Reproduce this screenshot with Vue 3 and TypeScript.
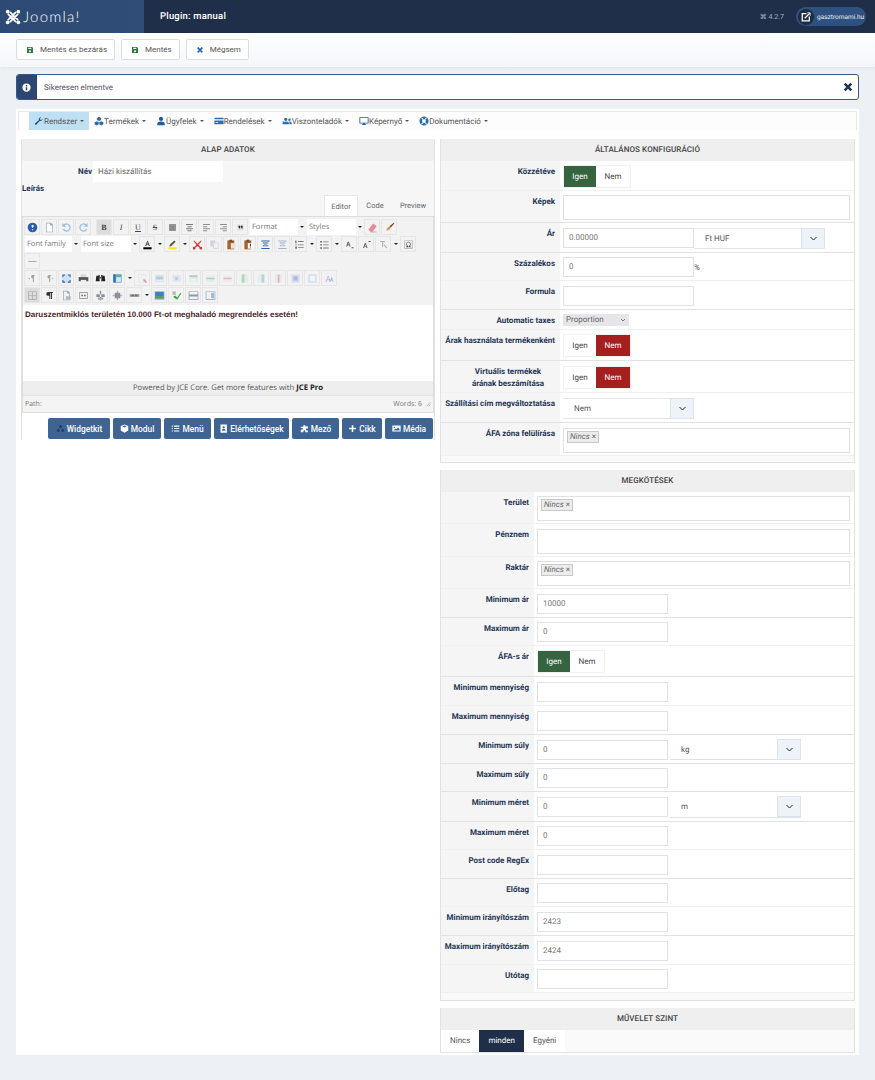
<script setup lang="ts">
interface Field {
  label: string;
  h: number;
  kind: "toggle" | "multi" | "input" | "combo" | "mini" | "select" | "none";
  value?: string;
  unit?: string;
  on?: "yes" | "no";
  chip?: boolean;
  suffix?: string;
  strong?: boolean;
  wrap?: boolean;
}

interface Tool {
  i?: string;
  t?: string;
  sel?: string;
  w?: number;
  arrow?: boolean;
  active?: boolean;
  dim?: boolean;
  gap?: boolean;
}

type Shape = [string, string];

const general: Field[] = [
  { label: "Közzétéve", h: 30, kind: "toggle", on: "yes" },
  { label: "Képek", h: 32, kind: "multi", strong: true },
  { label: "Ár", h: 30, kind: "combo", value: "0.00000", unit: "Ft HUF", strong: true },
  { label: "Százalékos", h: 28, kind: "input", value: "0", suffix: "%" },
  { label: "Formula", h: 29, kind: "input", strong: true },
  { label: "Automatic taxes", h: 20, kind: "mini" },
  { label: "Árak használata termékenként", h: 31, kind: "toggle", on: "no", strong: true },
  { label: "Virtuális termékek árának beszámítása", h: 32, kind: "toggle", on: "no", wrap: true },
  { label: "Szállítási cím megváltoztatása", h: 30, kind: "select", unit: "Nem", strong: true },
  { label: "ÁFA zóna felülírása", h: 33, kind: "multi", chip: true },
];

const limits: Field[] = [
  { label: "Terület", h: 32, kind: "multi", chip: true },
  { label: "Pénznem", h: 33, kind: "multi" },
  { label: "Raktár", h: 32, kind: "multi", chip: true },
  { label: "Minimum ár", h: 29, kind: "input", value: "10000", strong: true },
  { label: "Maximum ár", h: 28, kind: "input", value: "0" },
  { label: "ÁFA-s ár", h: 31, kind: "toggle", on: "yes", strong: true },
  { label: "Minimum mennyiség", h: 29, kind: "input" },
  { label: "Maximum mennyiség", h: 29, kind: "input", strong: true },
  { label: "Minimum súly", h: 29, kind: "combo", value: "0", unit: "kg", strong: true },
  { label: "Maximum súly", h: 28, kind: "input", value: "0", strong: true },
  { label: "Minimum méret", h: 30, kind: "combo", value: "0", unit: "m", strong: true },
  { label: "Maximum méret", h: 28, kind: "input", value: "0" },
  { label: "Post code RegEx", h: 29, kind: "input", strong: true },
  { label: "Előtag", h: 28, kind: "input" },
  { label: "Minimum irányítószám", h: 29, kind: "input", value: "2423", strong: true },
  { label: "Maximum irányítószám", h: 29, kind: "input", value: "2424" },
  { label: "Utótag", h: 28, kind: "input" },
];

const menu = [
  { text: "Rendszer", icon: "M21 6.5a5.5 5.5 0 0 1-7.4 5.2L6 20.5a2.2 2.2 0 0 1-3.3-3l8.8-7.5A5.5 5.5 0 0 1 17.5 3l-3.2 3.2.7 2.8 2.8.7L21 6.5z", color: "#2c4f7c" },
  { text: "Termékek", icon: "M12 2l5 2.500v5l-5 2.500-5-2.500v-5zM6.500 12.500l5 2.500v5l-5 2.500-5-2.500v-5zM17.500 12.500l5 2.500v5l-5 2.500-5-2.500v-5z", color: "#2f6ea8" },
  { text: "Ügyfelek", icon: "M12 2a5 5 0 1 1 0 10 5 5 0 0 1 0-10zM3 22v-3c0-3 3-6 9-6s9 3 9 6v3z", color: "#1f5aa0" },
  { text: "Rendelések", icon: "M1 4h22v16H1zM1 8v3h22V8zM4 15v2h6v-2z", color: "#2a70b0" },
  { text: "Viszonteladók", icon: "M9 4a4 4 0 1 1 0 8 4 4 0 0 1 0-8zM18 6a3 3 0 1 1 0 6 3 3 0 0 1 0-6zM1 20v-2c0-3 3-5 8-5s8 2 8 5v2zM18 20v-3c0-1.500-.5-3-1.500-4 3.500 0 7 1.500 7 4v3zM1 12h3v2H1z", color: "#2a70b0" },
  { text: "Képernyő", icon: "M2 3h20a1 1 0 0 1 1 1v13a1 1 0 0 1-1 1h-8v2h3v1.500H7V20h3v-2H2a1 1 0 0 1-1-1V4a1 1 0 0 1 1-1zM3 5v11h18V5z", color: "#1f5aa0" },
  { text: "Dokumentáció", icon: "M12 1a11 11 0 1 1 0 22 11 11 0 0 1 0-22zM12 7.500a4.500 4.500 0 1 0 0 9 4.500 4.500 0 0 0 0-9zM5 5l4 4 1.500-1L7 3.500zM19 5l-4 4-1.500-1L17 3.500zM5 19l4-4 1.500 1L7 20.500zM19 19l-4-4-1.500 1 3.500 4.500z", color: "#2a70b0" },
];

const icons: Record<string, Shape[]> = {
  help: [["M8 1a7 7 0 1 1 0 14A7 7 0 0 1 8 1z", "#2a5fb0"], ["M6.500 6a1.700 1.700 0 1 1 2.300 1.600c-.6.3-.8.6-.8 1.400M7.300 10.500h1.500v1.500H7.300z", "#fff"]],
  doc: [["M3 1h7l3 3v11H3z", "#fff"], ["M3 1h7l3 3v11H3zM4 2v12h8V5H9V2z", "#9aa3ad"]],
  undo: [["M8 2a6 6 0 1 1-5.500 8.500l2-.8A4 4 0 1 0 5.500 5L7.500 7H2V1.500l2 2A6 6 0 0 1 8 2z", "#5d9fd8"]],
  redo: [["M8 2a6 6 0 1 0 5.500 8.500l-2-.8A4 4 0 1 1 10.500 5L8.500 7H14V1.500l-2 2A6 6 0 0 0 8 2z", "#5d9fd8"]],
  alignl: [["M3 3h10v10H3z", "#8b8f94"]],
  alignc: [["M3 3h10v1.500H3zM5 6h6v1.500H5zM3 9h10v1.500H3zM5 12h6v1.500H5z", "#777"]],
  alignr: [["M3 3h10v1.500H3zM3 6h6v1.500H3zM3 9h10v1.500H3zM3 12h6v1.500H3z", "#8b8f94"]],
  alignj: [["M3 3h10v1.500H3zM7 6h6v1.500H7zM3 9h10v1.500H3zM7 12h6v1.500H7z", "#8b8f94"]],
  quote: [["M3 3h10v10H3z", "#e6e6e6"], ["M5 5.500h2.500v4H6V8H5zM8.500 5.500H11v4H9.500V8h-1z", "#222"]],
  eraser: [["M9 2l5 4-6 8H5L2 11z", "#e88a9a"], ["M5 14h9v1H5z", "#999"]],
  brush: [["M14 1l1 1-5 6-2-2z", "#7a4a1c"], ["M8 6l2 2-2 3-5 2c1-1 1-3 2-4z", "#c9963f"]],
  color: [["M8 2l3.500 8H10l-.7-2H6.700L6 10H4.500zM7.200 6.500h1.600L8 4.300z", "#333"], ["M2 12h12v3H2z", "#000"]],
  mark: [["M10.500 2l2 2L6 10.500 3.500 11l.5-2.500z", "#555"], ["M2 12h12v3H2z", "#ffe600"]],
  cut: [["M3 2l5 5 5-5 1 1-4.500 5.500 3 3a2 2 0 1 1-1.500 1.200L8 10l-3 2.700A2 2 0 1 1 3.500 11.500l3-3L2 3z", "#d23b3b"]],
  copy: [["M2 2h7v3h5v9H6v-3H2z", "#b7c3cc"], ["M7 6h6v7H7z", "#eef1f3"]],
  paste: [["M2 2h10v13H2z", "#a8632a"], ["M5 1h4v3H5z", "#555"], ["M7 6h7v8H7z", "#e8e4dc"]],
  paste2: [["M2 2h10v13H2z", "#a8632a"], ["M5 1h4v3H5z", "#555"], ["M7 6h7v8H7z", "#fff"], ["M10 7h1.500v3H10zM10 11h1.500v1.500H10z", "#333"]],
  lines: [["M2 2h12v1.500H2zM2 13h12v1.500H2z", "#2a5fb0"], ["M4 5h8v1.500H4zM4 9h8v1.500H4z", "#668"], ["M6 6h4v4H6z", "#88a8d8"]],
  lines2: [["M2 2h12v1.500H2zM2 13h12v1.500H2z", "#9fb3cf"], ["M4 5h8v1.500H4zM4 9h8v1.500H4z", "#aab"], ["M6 6h4v4H6z", "#c8d4e6"]],
  ol: [["M2 2h1.500v4H2zM2 8h2v1H2zM2 11h2v3H2z", "#555"], ["M6 3h8v1.200H6zM6 8h8v1.200H6zM6 12h8v1.200H6z", "#777"]],
  ul: [["M2 3h2v2H2zM2 7.500h2v2H2zM2 12h2v2H2z", "#444"], ["M6 3.500h8v1.200H6zM6 8h8v1.200H6zM6 12.500h8v1.200H6z", "#777"]],
  sub: [["M3 11l2.500-7h1.500l2.500 7H8l-.5-2H5l-.5 2zM5.400 8h1.700l-.8-2.500zM11 12h3v1.500h-3z", "#555"]],
  sup: [["M3 13l2.500-7h1.500l2.500 7H8l-.5-2H5l-.5 2zM5.400 10h1.700l-.8-2.500zM11 3h3v1.500h-3z", "#555"]],
  style: [["M3 3h7v1.500H7.500v7H6v-7H3z", "#a9b2b8"], ["M8.500 8.500h1l4 4v1h-1l-4-4z", "#a9b2b8"]],
  omega: [["M2 2h12v12H2zM3 3v10h10V3z", "#aaa"], ["M8 4a3.500 3.500 0 0 1 2 6.300V11h1.500v1h-3v-2.300a2.500 2.500 0 1 0-1 0V12h-3v-1H6v-.7A3.500 3.500 0 0 1 8 4z", "#444"]],
  hr: [["M2 7.500h12v1H2z", "#8a8a8a"]],
  ltr: [["M6 3h5v1.500h-1V13H8.500V8a2.500 2.500 0 0 1 0-5zM2 8l2-1.500v3z", "#9aa0a6"]],
  rtl: [["M5 3h5v1.500H9V13H7.500V8a2.500 2.500 0 0 1 0-5zM14 8l-2-1.500v3z", "#9aa0a6"]],
  full: [["M2 2h12v12H2z", "#cfe0f8"], ["M2 2h4v1.500H3.500V6H2zM10 2h4v4h-1.500V3.500H10zM2 10h1.500v2.500H6V14H2zM12.500 10H14v4h-4v-1.500h2.500z", "#2a5fb0"]],
  print: [["M4 2h8v4H4z", "#d8d8d8"], ["M1 6h14v6H1z", "#555"], ["M4 10h8v4H4z", "#eee"]],
  find: [["M2 4h4l1 8H1zM10 4h4l1 8H9z", "#222"], ["M5 3h2v5H5zM9 3h2v5H9zM6.500 6h3v2h-3z", "#333"]],
  table: [["M2 2h12v12H2z", "#5aa0d8"], ["M2 2h12v3H2z", "#63b7a0"], ["M2 2h3v12H2z", "#2f6ea8"], ["M6 6h7v7H6z", "#d4e6f4"]],
  t1: [["M2 2h11v12H2z", "#cfdcea"], ["M3 3h9v10H3z", "#eef3f8"], ["M9 9h2l3 3v2h-2l-3-3z", "#d86a6a"]],
  t2: [["M2 3h12v10H2z", "#bcd0e6"], ["M3 6h10v3H3z", "#8cb0d8"], ["M3 10h10v2H3z", "#e8f0f8"]],
  t3: [["M2 3h12v10H2z", "#d0dfec"], ["M6 6h4v4H6z", "#8fb6da"]],
  t4: [["M2 3h12v10H2z", "#d6e8df"], ["M2 3h12v3H2z", "#8cc0a8"], ["M4 8h8v4H4z", "#edf5f1"]],
  t5: [["M2 3h12v10H2z", "#dcebe2"], ["M2 7h12v2H2z", "#7cc08c"]],
  t6: [["M2 3h12v10H2z", "#e8e8ee"], ["M2 7h12v2H2z", "#e08a8a"]],
  t7: [["M3 2h10v12H3z", "#dcebe2"], ["M4 2h4v12H4z", "#8cc88c"]],
  t8: [["M3 2h10v12H3z", "#dceaf0"], ["M8 2h4v12H8z", "#8cc8c0"]],
  t9: [["M3 2h10v12H3z", "#dde3ec"], ["M7 2h2.500v12H7z", "#e08a8a"]],
  t10: [["M2 2h12v12H2z", "#c4d0ee"], ["M5 5h6v6H5z", "#7f93d6"]],
  t11: [["M2 2h12v12H2z", "#b8d0e8"], ["M4 4h8v8H4z", "#f2f6fa"]],
  aa: [["M2 13L5.500 4h1L10 13H8.500l-.8-2.500H4.300L3.500 13zM4.800 9h2.400L6 5.700z", "#c080d0"], ["M8 13l2.500-7h1l2.500 7h-1.300l-.5-1.800h-2.400l-.5 1.800z", "#6aa0e0"]],
  grid: [["M2 2h12v12H2zM3 3v4.500h4.500V3zM8.500 3v4.500H13V3zM3 8.500V13h4.500V8.500zM8.500 8.500V13H13V8.500z", "#a4a4a4"]],
  para: [["M6 3h7v1.500h-1.300V13h-1.400V4.500H9.200V13H7.800V8.500H6a2.750 2.750 0 0 1 0-5.500z", "#333"]],
  file: [["M3 1h7l3 3v11H3z", "#f0f2f4"], ["M3 1h7l3 3v11H3zM4 2v12h8V5H9V2z", "#9aa3ad"], ["M7 9h7v5H7z", "#a8bcc8"]],
  box: [["M2 3h12v10H2zM3 4v8h10V4z", "#888"], ["M5 7h2v2H5zM9 7h2v2H9z", "#555"]],
  anchor: [["M7 1h2v14H7zM2 6h12v4H2z", "#8a8f94"], ["M4 11h8v3H4z", "#a5a9ad"]],
  spark: [["M7 1h2v14H7zM1 7h14v2H1z", "#b0b4b8"], ["M4 4h8v8H4z", "#8e9296"]],
  link: [["M1 6h14v4H1z", "#9a9ea2"], ["M4 7h3v2H4zM9 7h3v2H9z", "#666"]],
  image: [["M1 2h14v12H1z", "#8aa4bc"], ["M2 3h12v6H2z", "#3a80c8"], ["M2 9h12v3H2z", "#5a9a58"]],
  check: [["M2 2h5v5H2z", "#b8b8b8"], ["M3 10l3-2 3 3 5-7 1 1-6 9z", "#3aa83a"]],
  hrule: [["M1 2h14v12H1zM2 3v3.500h12V3zM2 9.500V13h12V9.500z", "#8a9aa8"]],
  win: [["M1 2h14v12H1zM2 3v10h12V3z", "#8fa4b8"], ["M9 4h4v8H9z", "#9cb6d4"]],
};

const toolRows: Tool[][] = [
  [
    { i: "help" }, { i: "doc" }, { i: "undo", dim: true }, { i: "redo", dim: true, gap: true },
    { t: "B", active: true }, { t: "I" }, { t: "U" }, { t: "S" },
    { i: "alignl" }, { i: "alignc" }, { i: "alignr" }, { i: "alignj" }, { i: "quote" },
    { sel: "Format", w: 48 }, { sel: "Styles", w: 49 }, { i: "eraser" }, { i: "brush" },
  ],
  [
    { sel: "Font family", w: 47 }, { sel: "Font size", w: 50 },
    { i: "color", arrow: true }, { i: "mark", arrow: true },
    { i: "cut" }, { i: "copy", dim: true }, { i: "paste" }, { i: "paste2" }, { i: "lines" }, { i: "lines2" },
    { i: "ol", arrow: true }, { i: "ul", arrow: true }, { i: "sub" }, { i: "sup" },
    { i: "style", arrow: true }, { i: "omega" },
  ],
  [{ i: "hr" }],
  [
    { i: "ltr" }, { i: "rtl" }, { i: "full" }, { i: "print" }, { i: "find" }, { i: "table", arrow: true },
    { i: "t1", dim: true }, { i: "t2", dim: true }, { i: "t3", dim: true }, { i: "t4", dim: true }, { i: "t5", dim: true },
    { i: "t6", dim: true }, { i: "t7", dim: true }, { i: "t8", dim: true }, { i: "t9", dim: true }, { i: "t10", dim: true },
    { i: "t11", dim: true }, { i: "aa", dim: true },
  ],
  [
    { i: "grid", active: true }, { i: "para" }, { i: "file" }, { i: "box" }, { i: "anchor" }, { i: "spark" },
    { i: "link", arrow: true }, { i: "image" }, { i: "check" }, { i: "hrule" }, { i: "win" },
  ],
];

const insertButtons = [
  { text: "Widgetkit", w: 62, color: "#27436a", d: "M12 2l4 3v4l-4 3-4-3V5zM6 12l4 3v4l-4 3-4-3v-4zM18 12l4 3v4l-4 3-4-3v-4z" },
  { text: "Modul", w: 48, color: "#fff", d: "M12 1l10 4.500v12L12 23 2 17.500v-12zM12 4L6 6.500l6 3 6-3z" },
  { text: "Menü", w: 47, color: "#fff", d: "M2 4h3v3H2zM8 4h14v3H8zM2 10.500h3v3H2zM8 10.500h14v3H8zM2 17h3v3H2zM8 17h14v3H8z" },
  { text: "Elérhetőségek", w: 75, color: "#fff", d: "M4 1h17v22H4zM12.500 6a3 3 0 1 0 0 6 3 3 0 0 0 0-6zM7.500 18h10c0-3-2-4.500-5-4.500s-5 1.500-5 4.500z" },
  { text: "Mező", w: 47, color: "#fff", d: "M9 3h5v3a2 2 0 0 0 3 0h4v6h-3a2.500 2.500 0 0 0 0 5h3v5H14v-3a2.500 2.500 0 0 0-5 0v3H2v-7h3a2.500 2.500 0 0 0 0-5H2V7h7z" },
  { text: "Cikk", w: 40, color: "#fff", d: "M10 3h4v7h7v4h-7v7h-4v-7H3v-4h7z" },
  { text: "Média", w: 48, color: "#fff", d: "M1 4h22v16H1zM6 7a2 2 0 1 0 0 4 2 2 0 0 0 0-4zM4 17h16v-4l-4-4-5 5-2-2z" },
];

const floppy = "M3 3h15l3 3v15H3zM7 5v4h9V5zM12 13a3 3 0 1 0 0 6 3 3 0 0 0 0-6z";
</script>

<template>
  <header class="topbar">
    <div class="brand">
      <svg class="mark" viewBox="0 0 24 24" fill="none" stroke="#fff" stroke-width="2.600" stroke-linecap="round">
        <path d="M5 8l11 11M19 8L8 19M8 5l11 11M16 5L5 16" />
        <circle cx="4" cy="4" r="2.800" fill="#fff" stroke="none" />
        <circle cx="20" cy="4" r="2.800" fill="#fff" stroke="none" />
        <circle cx="4" cy="20" r="2.800" fill="#fff" stroke="none" />
        <circle cx="20" cy="20" r="2.800" fill="#fff" stroke="none" />
      </svg>
      <span class="word">Joomla!</span>
    </div>
    <div class="page-title">Plugin: manual</div>
    <div class="version">⌘ 4.2.7</div>
    <div class="site-pill">
      <span class="site-icon">
        <svg viewBox="0 0 24 24" width="10" height="10" fill="none" stroke="#fff" stroke-width="3">
          <path d="M13 4H3v17h17V11" />
          <path d="M9 15L21 3" />
          <path d="M15 2h7v7" stroke-width="2" />
        </svg>
      </span>
      <span>gasztromami.hu</span>
    </div>
  </header>

  <div class="actions">
    <button class="action">
      <svg viewBox="0 0 24 24" width="8" height="8"><path :d="floppy" fill="#2f7a3f" fill-rule="evenodd" /></svg>
      Mentés és bezárás
    </button>
    <button class="action">
      <svg viewBox="0 0 24 24" width="8" height="8"><path :d="floppy" fill="#2f7a3f" fill-rule="evenodd" /></svg>
      Mentés
    </button>
    <button class="action">
      <svg viewBox="0 0 24 24" width="8" height="8"><path d="M5 5l14 14M19 5L5 19" stroke="#2a63b0" stroke-width="5" /></svg>
      Mégsem
    </button>
  </div>

  <div class="alert">
    <div class="alert-icon">
      <svg viewBox="0 0 24 24" width="9" height="9"><path d="M12 1a11 11 0 1 1 0 22 11 11 0 0 1 0-22zM10 5v4h4V5zM9.500 11v2H10v4H9.500v2h5v-2H14v-6z" fill="#fff" fill-rule="evenodd" /></svg>
    </div>
    <span class="alert-text">Sikeresen elmentve</span>
    <svg class="alert-close" viewBox="0 0 24 24" width="10" height="10"><path d="M4 4l16 16M20 4L4 20" stroke="#1f3556" stroke-width="6" /></svg>
  </div>

  <main class="main">
    <nav class="menu">
      <div
        v-for="(item, idx) in menu"
        :key="item.text"
        class="menu-item"
        :class="{ current: idx === 0 }"
      >
        <svg viewBox="0 0 24 24" width="10" height="10"><path :d="item.icon" :fill="item.color" fill-rule="evenodd" /></svg>
        <span>{{ item.text }}</span>
        <i class="caret"></i>
      </div>
    </nav>

    <div class="columns">
      <section class="panel left">
        <h3 class="panel-title">ALAP ADATOK</h3>
        <div class="name-row">
          <label>Név</label>
          <div class="name-input">Házi kiszállítás</div>
        </div>
        <div class="desc-label">Leírás</div>
        <div class="tabs">
          <span class="tab on">Editor</span>
          <span class="tab">Code</span>
          <span class="tab">Preview</span>
        </div>
        <div class="editor">
          <div class="tools">
            <div v-for="(row, r) in toolRows" :key="r" class="tool-row">
              <template v-for="(tool, k) in row" :key="k">
                <div v-if="tool.sel" class="tool-select" :style="{ width: tool.w + 'px' }">{{ tool.sel }}</div>
                <div v-if="tool.sel" class="tool-arrow"><i class="caret dark"></i></div>
                <div
                  v-else
                  class="tool"
                  :class="{ active: tool.active, dim: tool.dim, spaced: tool.gap }"
                >
                  <svg v-if="tool.i" viewBox="0 0 16 16" width="11" height="11">
                    <path v-for="(s, n) in icons[tool.i]" :key="n" :d="s[0]" :fill="s[1]" fill-rule="evenodd" />
                  </svg>
                  <span v-else class="tool-letter" :class="'l-' + tool.t">{{ tool.t }}</span>
                </div>
                <div v-if="tool.arrow" class="tool-arrow"><i class="caret dark"></i></div>
              </template>
            </div>
          </div>
          <div class="content">Daruszentmiklós területén 10.000 Ft-ot meghaladó megrendelés esetén!</div>
          <div class="powered">Powered by JCE Core. Get more features with <b>JCE Pro</b></div>
          <div class="status">
            <span>Path:</span>
            <span class="words">Words: 6</span>
            <svg viewBox="0 0 8 8" width="6" height="6"><path d="M7 2L2 7M7 5L5 7" stroke="#999" stroke-width="1" /></svg>
          </div>
        </div>
        <div class="insert-row">
          <button v-for="b in insertButtons" :key="b.text" class="insert" :style="{ width: b.w + 'px' }">
            <svg viewBox="0 0 24 24" width="9" height="9"><path :d="b.d" :fill="b.color" fill-rule="evenodd" /></svg>
            {{ b.text }}
          </button>
        </div>
      </section>

      <div class="right">
        <section v-for="(group, g) in [general, limits]" :key="g" class="panel" :class="g === 0 ? 'wide-label' : 'narrow-label'">
          <h3 class="panel-title">{{ g === 0 ? "ÁLTALÁNOS KONFIGURÁCIÓ" : "MEGKÖTÉSEK" }}</h3>
          <div
            v-for="row in group"
            :key="row.label"
            class="row"
            :class="{ strong: row.strong }"
            :style="{ height: row.h + 'px' }"
          >
            <div class="label" :class="{ wrapped: row.wrap }">{{ row.label }}</div>
            <div class="field">
              <div v-if="row.kind === 'toggle'" class="toggle">
                <span :class="{ yes: row.on === 'yes' }">Igen</span>
                <span :class="{ no: row.on === 'no' }">Nem</span>
              </div>
              <div v-else-if="row.kind === 'multi'" class="multi">
                <span v-if="row.chip" class="chip"><em>Nincs</em> ×</span>
              </div>
              <template v-else-if="row.kind === 'input' || row.kind === 'combo'">
                <div class="input">{{ row.value }}</div>
                <span v-if="row.suffix" class="suffix">{{ row.suffix }}</span>
                <div v-if="row.kind === 'combo'" class="select" :class="{ joined: g === 0 }">
                  <span>{{ row.unit }}</span>
                  <b class="chev"><svg viewBox="0 0 12 12" width="9" height="9"><path d="M2 4l4 4 4-4" fill="none" stroke="#222" stroke-width="1.300" /></svg></b>
                </div>
              </template>
              <div v-else-if="row.kind === 'select'" class="select joined">
                <span>{{ row.unit }}</span>
                <b class="chev"><svg viewBox="0 0 12 12" width="9" height="9"><path d="M2 4l4 4 4-4" fill="none" stroke="#222" stroke-width="1.300" /></svg></b>
              </div>
              <div v-else-if="row.kind === 'mini'" class="mini">
                Proportion
                <svg viewBox="0 0 12 12" width="6" height="6"><path d="M2 4l4 4 4-4" fill="none" stroke="#555" stroke-width="1.500" /></svg>
              </div>
            </div>
          </div>
          <div class="panel-foot"></div>
        </section>

        <section class="panel">
          <h3 class="panel-title">MŰVELET SZINT</h3>
          <div class="levels">
            <span>Nincs</span>
            <span class="picked">minden</span>
            <span>Egyéni</span>
          </div>
        </section>
      </div>
    </div>
  </main>
</template>

<style>
html, body { background: #edf1f6; text-rendering: geometricPrecision; }
</style>

<style scoped>
* { box-sizing: border-box; }
.topbar { height: 33px; background: #1f2f4a; display: flex; align-items: center; font-family: Roboto, "Liberation Sans", sans-serif; }
.brand { width: 144px; height: 33px; background: linear-gradient(90deg, #2c4a73, #2f4d76); display: flex; align-items: center; padding-left: 5px; }
.mark { width: 16px; height: 16px; }
.word { color: #fff; font-family: Lato, "Noto Sans", sans-serif; font-weight: 300; font-size: 15px; margin-left: 2px; letter-spacing: 1.200px; }
.page-title { color: #fff; font-size: 9.500px; font-weight: 500; margin-left: 16px; letter-spacing: 0.2px; }
.version { margin-left: auto; color: #a8b2c0; font-size: 7px; margin-right: 12px; }
.site-pill { width: 70px; height: 19px; background: #2f5180; border-radius: 10px; display: flex; align-items: center; color: #e8eef6; font-size: 6.500px; font-weight: 400; margin-right: 9px; padding-left: 2px; gap: 3px; }
.site-icon { width: 16px; height: 16px; border-radius: 50%; background: #1c2c45; display: flex; align-items: center; justify-content: center; }

.actions { height: 34px; background: linear-gradient(#fff, #f4f6fa); display: flex; align-items: flex-start; padding: 6px 16px 0; gap: 6px; box-shadow: 0 1px 3px rgba(40, 60, 100, 0.08); }
.action { height: 21px; padding: 0 7px 0 9px; background: #fff; border: 1px solid #d9dee6; border-radius: 2px; font: 400 8px Roboto, sans-serif; color: #555; display: flex; align-items: center; gap: 6px; }

.alert { margin: 7px 16px 0; height: 26px; background: #fff; border: 1px solid #3a5a85; border-radius: 3px; display: flex; align-items: center; font: 400 8px Roboto, sans-serif; color: #556; overflow: hidden; }
.alert-icon { width: 21px; height: 26px; margin-left: -1px; background: #2b4770; display: flex; align-items: center; justify-content: center; }
.alert-text { margin-left: 7px; }
.alert-close { margin-left: auto; margin-right: 5px; }

.main { margin: 9px 16px 0; width: 843px; background: #fff; padding: 2px 0 2px; font-family: Roboto, "Liberation Sans", sans-serif; }
.menu { margin: 0 2px; height: 19px; border: 1px solid #e8e8e8; border-bottom: 0; background: #fdfdfd; display: flex; padding-left: 10px; }
.menu-item { display: flex; align-items: center; padding: 0 5px; font-size: 8px; color: #555; height: 18px; white-space: nowrap; }
.menu-item.current { background: #bfe0f3; }
.caret { display: inline-block; width: 0; height: 0; border: 2px solid transparent; border-top: 2.500px solid #555; border-bottom: 0; margin-left: 3px; }
.caret.dark { border-top-color: #222; margin: 0; }

.columns { display: flex; gap: 5px; padding: 9px 4px 0 5px; align-items: flex-start; }
.panel { border: 1px solid #e2e2e2; border-top: 0; background: #fff; }
.panel-title { margin: 0; height: 22px; line-height: 22px; background: #efefef; text-align: center; font-size: 8px; font-weight: 500; color: #444; letter-spacing: 0.1px; }

.left { width: 414px; height: 301px; background: #f6f6f6; }
.name-row { height: 21px; display: flex; justify-content: flex-start; }
.name-row label { width: 70px; text-align: right; font-size: 8px; font-weight: 700; color: #1f3556; line-height: 21px; }
.name-input { margin-left: 1px; width: 130px; height: 21px; background: #fff; font-size: 8px; color: #666; line-height: 21px; padding-left: 5px; }
.desc-label { height: 12px; line-height: 12px; font-size: 8px; font-weight: 700; color: #1f3556; padding-top: 0; margin-top: 1px; }
.tabs { height: 21px; display: flex; justify-content: flex-end; font-size: 7.500px; color: #666; }
.tab { width: 34px; text-align: center; line-height: 21px; }
.tab:last-child { width: 42px; }
.tab.on { background: #fff; border: 1px solid #e6e6e6; border-bottom: 0; }
.editor { width: 412px; border: 1px solid #ddd; background: #f2f2f2; }
.tools { height: 88px; padding: 2px 0 0 1px; }
.tool-row { display: flex; height: 17px; }
.tool { width: 16px; height: 16px; margin-right: 1px; border: 1px solid #e6e6e6; display: flex; align-items: center; justify-content: center; }
.tool.active { background: #dcdcdc; }
.tool.dim svg { opacity: 0.6; }
.tool.spaced { margin-right: 5px; }
.tool-letter { font: 700 8px "Liberation Serif", serif; color: #444; }
.l-I { font-style: italic; font-weight: 400; }
.l-U { text-decoration: underline; font-weight: 400; }
.l-S { text-decoration: line-through; font-weight: 400; }
.tool-select { height: 16px; margin-left: 1px; background: #fff; font-size: 7.500px; color: #777; line-height: 16px; padding-left: 2px; font-family: "Open Sans", sans-serif; }
.tool-arrow { width: 7px; height: 16px; margin-right: 1px; display: flex; align-items: center; justify-content: center; }
.content { height: 76px; background: #fff; padding: 4px 2px; font: 700 8px/11px "Liberation Sans", sans-serif; color: #4a1f2a; }
.powered { height: 15px; background: #eee; border-bottom: 1px solid #e2e2e2; text-align: center; font: 400 7.700px/15px "Open Sans", sans-serif; color: #555; }
.powered b { color: #222; }
.status { height: 16px; display: flex; align-items: center; padding: 0 2px; font: 400 7px "Open Sans", sans-serif; color: #777; background: #f4f4f4; }
.words { margin-left: auto; margin-right: 3px; }
.insert-row { display: flex; justify-content: flex-end; gap: 3px; padding: 5px 1px 0 0; background: #fff; height: 27px; }
.insert { height: 21px; border: 0; border-radius: 2px; background: #3e6493; color: #fff; font: 500 8.400px Roboto, sans-serif; display: flex; align-items: center; justify-content: center; gap: 2px; padding: 0; }

.right { width: 415px; display: flex; flex-direction: column; gap: 7px; }
.row { display: flex; border-bottom: 1px solid #f0f0f0; }
.row.strong { border-bottom-color: #e2e2e2; }
.label { flex: none; background: #f5f5f5; text-align: right; padding: 5px 5px 0 0; font-size: 8px; font-weight: 700; line-height: 12px; color: #1f3556; white-space: nowrap; }
.wide-label .label { width: 119px; }
.narrow-label .label { width: 93px; }
.label.wrapped { white-space: normal; padding: 5px 11px 0 26px; text-align: center; }
.field { flex: 1; padding: 1px 0 0 3px; display: flex; align-items: center; min-width: 0; }
.toggle { display: flex; height: 21px; font-size: 8px; color: #444; background: #fff; box-shadow: 0 0 0 1px #f0f0f0; margin-left: 1px; }
.toggle span { width: 32px; line-height: 21px; text-align: center; }
.toggle span + span { width: 34px; }
.toggle .yes { background: #366340; color: #fff; }
.toggle .no { background: #a51f1f; color: #fff; }
.multi { flex: 1; margin: 1px 4px 0 0; height: 25px; border: 1px solid #e0e0e0; background: #fff; padding: 2px 3px; }
.chip { display: inline-block; height: 12px; padding: 0 2px; background: #ececec; border: 1px solid #c8c8c8; font-size: 8px; line-height: 10px; color: #666; vertical-align: top; }
.input { width: 131px; height: 20px; border: 1px solid #dfe2e6; background: #fff; font-size: 8px; line-height: 18px; color: #777; padding-left: 5px; flex: none; }
.suffix { font-size: 8px; color: #555; }
.select { width: 131px; height: 21px; background: #fff; border-bottom: 1px solid #dfe2e6; display: flex; align-items: center; justify-content: space-between; padding-left: 11px; font-size: 8px; color: #555; margin-left: 2px; flex: none; }
.select.joined { margin-left: 0; border-top: 1px solid #e6e9ed; }
.chev { width: 24px; height: 21px; background: #eef3fa; border: 1px solid #dde3ec; display: flex; align-items: center; justify-content: center; }
.mini { width: 66px; height: 12px; background: #e5e5ea; font-size: 8px; color: #666; line-height: 12px; padding: 0 3px; display: flex; justify-content: space-between; align-items: center; }
.panel-foot { height: 7px; background: #f9f9f9; }
.wide-label .panel-foot { height: 6px; }
.levels { display: flex; height: 22px; background: #fafafa; font-size: 8px; color: #555; }
.levels span { line-height: 22px; text-align: center; background: #fff; padding: 0 9px; }
.levels .picked { background: #1f2f4a; color: #fff; }
</style>
